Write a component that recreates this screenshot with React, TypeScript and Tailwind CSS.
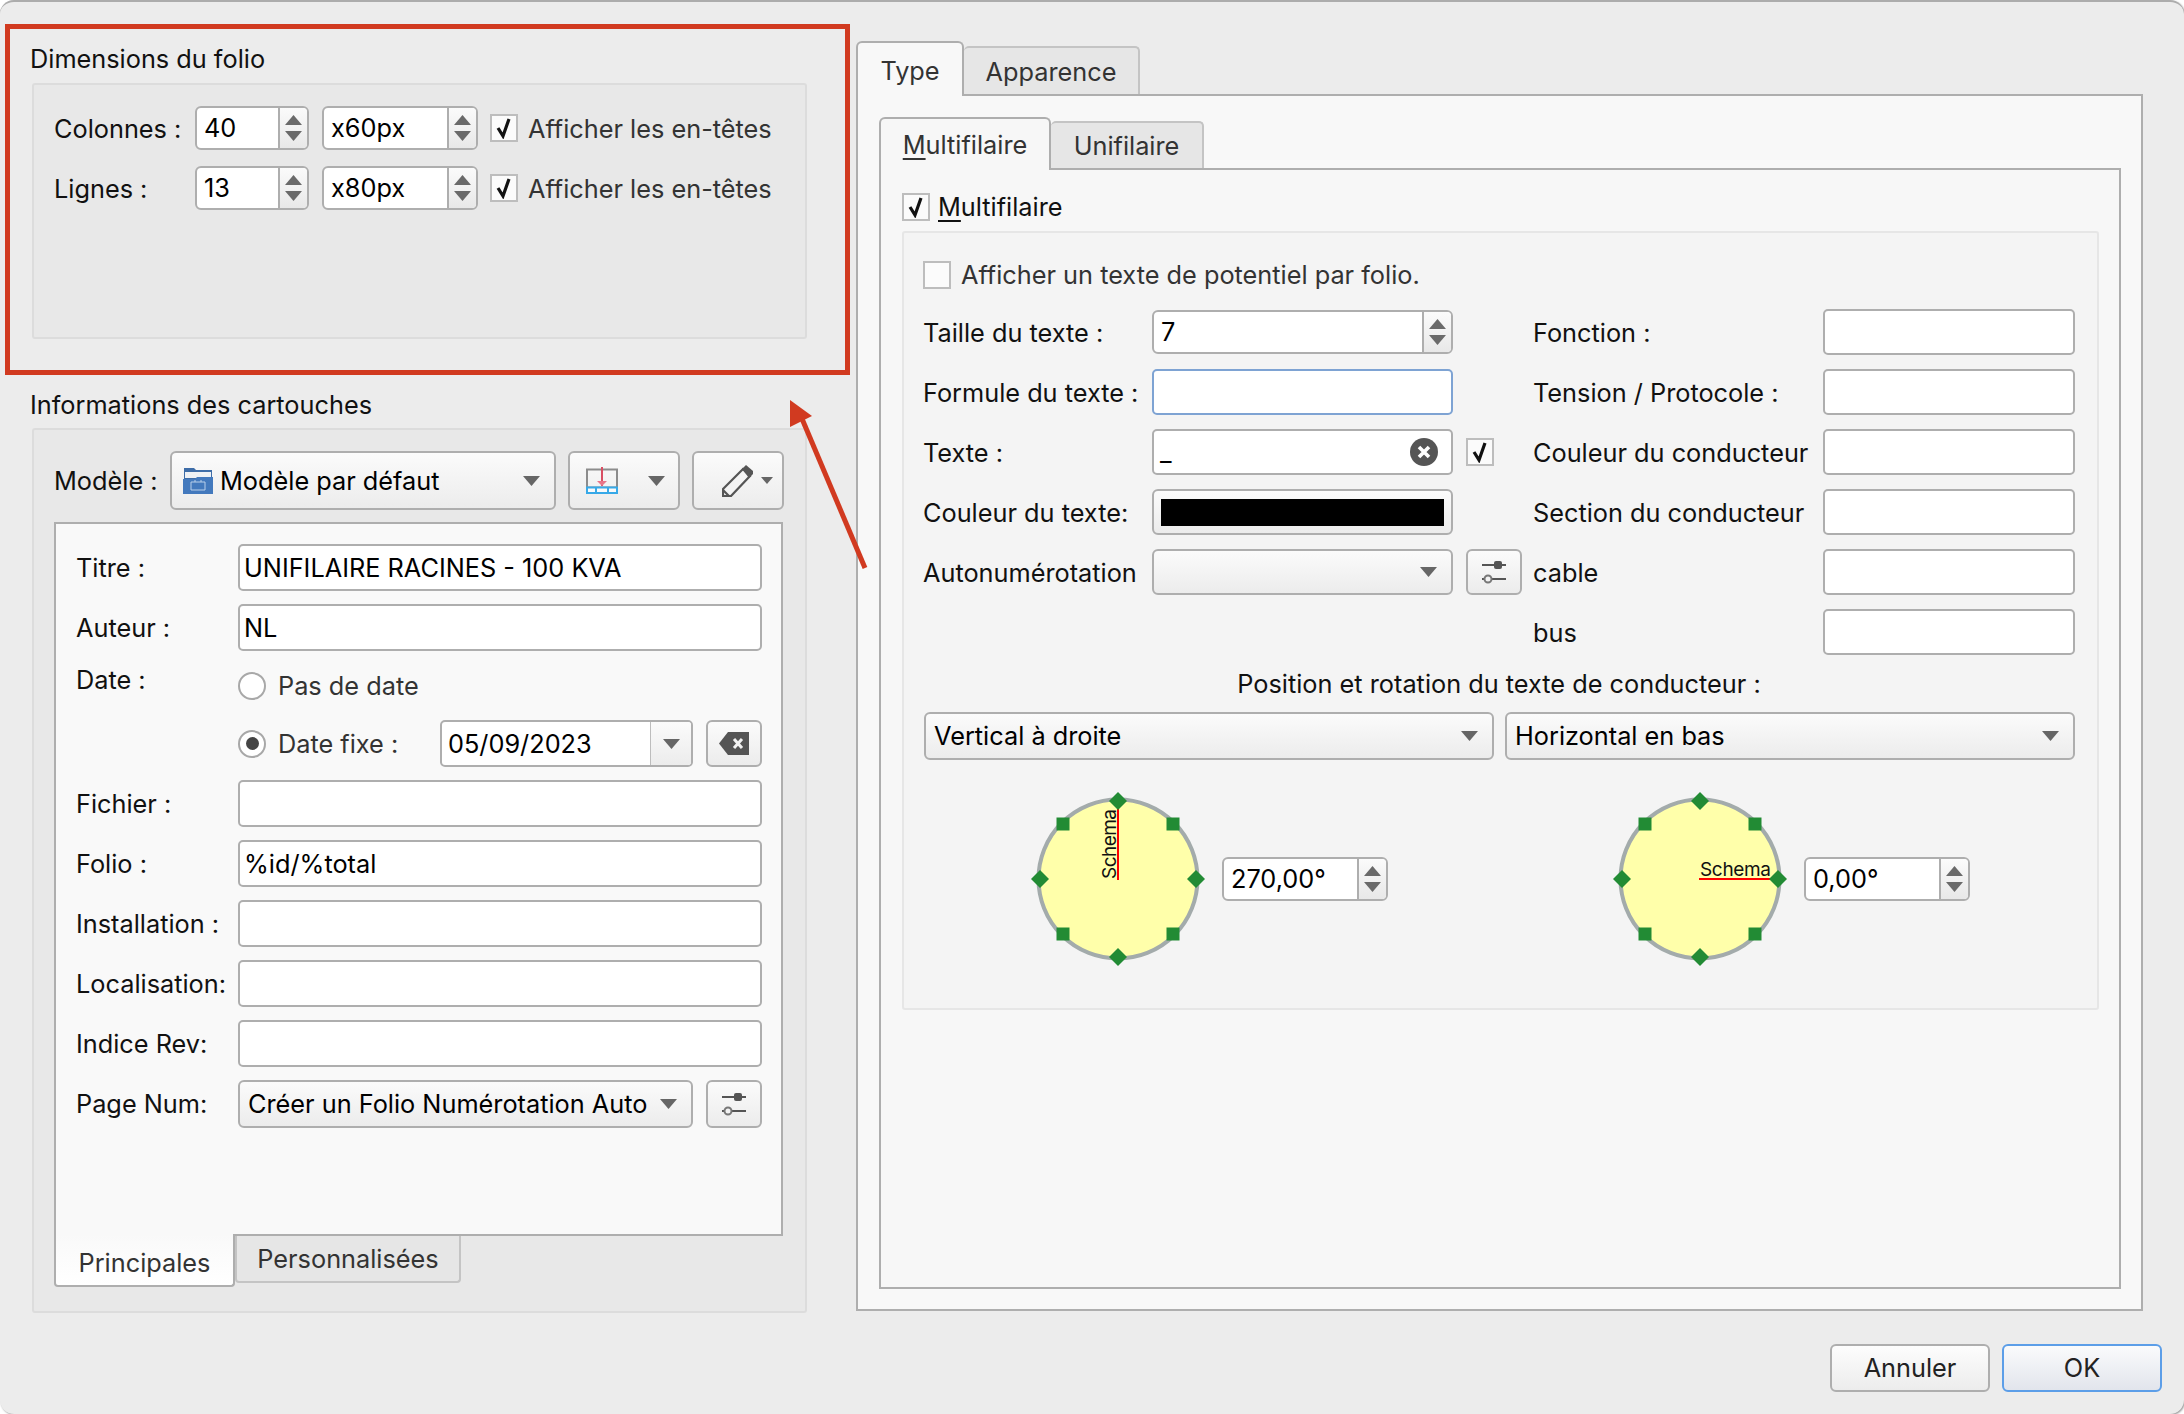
import type { ReactNode } from 'react'

const fieldBaseClass = 'flex items-center rounded-[5px] border-2 bg-white text-black'
const textFieldClass = `${fieldBaseClass} border-[#aeaeae]`
const buttonClass = 'flex items-center rounded-[6px] border-2 border-[#aeaeae] bg-gradient-to-b from-[#fbfbfb] to-[#ececec] text-black'

function Caret({ small = false }: { small?: boolean }) {
    return (
        <svg width={small ? 12 : 17} height={small ? 7 : 10} viewBox="0 0 17 10" preserveAspectRatio="none">
            <polygon points="0,0 17,0 8.5,10" fill="#666" />
        </svg>
    )
}

function SpinArrows() {
    return (
        <div className="flex flex-col items-center gap-[6px]">
            <svg width="17" height="10" viewBox="0 0 17 10">
                <polygon points="0,10 17,10 8.5,0" fill="#6a6a6a" />
            </svg>
            <svg width="17" height="10" viewBox="0 0 17 10">
                <polygon points="0,0 17,0 8.5,10" fill="#6a6a6a" />
            </svg>
        </div>
    )
}

function SpinBox({ value, width, height = 'h-[44px]' }: { value: string; width: string; height?: string }) {
    return (
        <div className={`flex overflow-hidden rounded-[6px] border-2 border-[#aeaeae] bg-white ${width} ${height}`}>
            <div className="flex flex-1 items-center pl-[7px] text-black">{value}</div>
            <div className="flex w-[29px] items-center justify-center border-l-2 border-[#aeaeae] bg-gradient-to-b from-[#fbfbfb] to-[#e8e8e8]">
                <SpinArrows />
            </div>
        </div>
    )
}

function Check({ checked = true }: { checked?: boolean }) {
    return (
        <div className="flex h-[28px] w-[28px] shrink-0 items-center justify-center border-2 border-[#bdbdbd] bg-[#fbfbfb]">
            {checked && (
                <svg width="18" height="22" viewBox="0 0 18 22">
                    <path d="M3 11 L8 19 L14 2" fill="none" stroke="#111" strokeWidth="3.2" />
                </svg>
            )}
        </div>
    )
}

function Radio({ checked = false }: { checked?: boolean }) {
    return (
        <div className="flex h-[28px] w-[28px] shrink-0 items-center justify-center rounded-full border-2 border-[#a8a8a8] bg-white">
            {checked && <div className="h-[13px] w-[13px] rounded-full bg-[#444]" />}
        </div>
    )
}

function SlidersIcon() {
    return (
        <svg width="26" height="26" viewBox="0 0 26 26">
            <path d="M1 6 H25 M1 20 H25" stroke="#555" strokeWidth="2" />
            <rect x="13" y="2" width="8" height="8" rx="2" fill="#555" />
            <circle cx="7" cy="20" r="3.5" fill="#f2f2f2" stroke="#777" strokeWidth="2" />
        </svg>
    )
}

function FolderIcon() {
    return (
        <svg width="30" height="26" viewBox="0 0 30 26" className="ml-[3px] mr-[1px]">
            <path d="M1 0 H11 L13 2 H29 V12 H1 Z" fill="#3e6da8" />
            <rect x="2" y="4" width="26" height="6" fill="#eef1f5" />
            <path d="M0 11 H12 L14 9 H30 V26 H0 Z" fill="#4379bd" />
            <path d="M8 14 H22 V22 H8 Z M12 14 V12 M18 14 V12" fill="none" stroke="#b9d0ea" strokeWidth="1" />
        </svg>
    )
}

function TemplateIcon() {
    return (
        <svg width="32" height="27" viewBox="0 0 32 27">
            <rect x="1" y="2.5" width="30" height="18" fill="none" stroke="#8c8c8c" strokeWidth="2" />
            <path d="M16 0 V19" stroke="#d94f63" strokeWidth="2" />
            <polygon points="11,14 21,14 16,19" fill="#e8768a" />
            <rect x="1" y="20.5" width="30" height="5.5" fill="#fafafa" stroke="#37a9e8" strokeWidth="2" />
            <path d="M10 20 V27 M22 20 V27" stroke="#37a9e8" strokeWidth="2" />
        </svg>
    )
}

function PencilIcon() {
    return (
        <svg width="31" height="32" viewBox="0 0 31 32" className="shrink-0">
            <path d="M1 24 L21 4 L28 11 L9 31 L1 31 Z" fill="#f4f4f4" stroke="#555" strokeWidth="2.2" />
            <path d="M20 4 L24 0 L31 6 V9 L27 13 Z" fill="#555" />
            <path d="M1 25 L7 31" stroke="#555" strokeWidth="2.2" />
        </svg>
    )
}

function EraseIcon() {
    return (
        <svg width="32" height="25" viewBox="0 0 32 25">
            <path d="M10 1 H31 V24 H10 L1 12.5 Z" fill="#555" />
            <path d="M16 8 L24 17 M24 8 L16 17" stroke="#f2f2f2" strokeWidth="3" />
        </svg>
    )
}

function ClearIcon() {
    return (
        <svg width="28" height="28" viewBox="0 0 28 28">
            <circle cx="14" cy="14" r="14" fill="#555" />
            <path d="M9 9 L19 19 M19 9 L9 19" stroke="#fff" strokeWidth="3.6" />
        </svg>
    )
}

function Combo({ children, width, height = 'h-[48px]' }: { children?: ReactNode; width: string; height?: string }) {
    return (
        <div className={`${buttonClass} justify-between pl-[8px] pr-[14px] ${width} ${height}`}>
            <div className="flex items-center gap-[6px] whitespace-nowrap">{children}</div>
            <Caret />
        </div>
    )
}

function CardRow({ label, value }: { label: string; value?: string }) {
    return (
        <div className="flex h-[47px] items-center">
            <div className="w-[162px] shrink-0 pt-[1px]">{label}</div>
            <div className={`${textFieldClass} h-[47px] w-[524px] pl-[4px]`}>{value}</div>
        </div>
    )
}

function SizeRow({ label, value, unit }: { label: string; value: string; unit: string }) {
    return (
        <div className="flex items-center">
            <div className="w-[141px] shrink-0 whitespace-nowrap pt-[1px]">{label}</div>
            <SpinBox value={value} width="w-[114px]" />
            <div className="ml-[13px]">
                <SpinBox value={unit} width="w-[156px]" />
            </div>
            <div className="ml-[12px]">
                <Check />
            </div>
            <div className="ml-[10px] whitespace-nowrap pt-[1px] text-[#333]">Afficher les en-têtes</div>
        </div>
    )
}

function ConductorRow({ label, children }: { label: string; children: ReactNode }) {
    return (
        <div className="flex h-[46px] items-center">
            <div className="w-[229px] shrink-0 whitespace-nowrap pt-[2px]">{label}</div>
            {children}
        </div>
    )
}

function SideField({ label }: { label: string }) {
    return (
        <div className="flex h-[46px] items-center">
            <div className="w-[290px] shrink-0 whitespace-nowrap pt-[2px]">{label}</div>
            <div className={`${textFieldClass} h-[46px] w-[252px]`} />
        </div>
    )
}

const squares = [
    [35, 35],
    [145, 35],
    [35, 145],
    [145, 145],
]
const diamonds = [
    [90, 12],
    [12, 90],
    [168, 90],
    [90, 168],
]

function Dial({ vertical }: { vertical: boolean }) {
    return (
        <svg width="180" height="180" viewBox="0 0 180 180" className="shrink-0">
            <circle cx="90" cy="90" r="79.5" fill="#ffffaa" stroke="#a3abab" strokeWidth="4" />
            {vertical ? (
                <>
                    <text transform="translate(88 90) rotate(-90)" fontSize="19" fill="#111" textLength="70">Schema</text>
                    <path d="M90 20 V91" stroke="#f00" strokeWidth="2" />
                </>
            ) : (
                <>
                    <text x="90" y="87" fontSize="19" fill="#111" textLength="71">Schema</text>
                    <path d="M89 90 H160" stroke="#f00" strokeWidth="2" />
                </>
            )}
            {squares.map(([x, y]) => (
                <rect key={`${x}-${y}`} x={x - 6.5} y={y - 6.5} width="13" height="13" fill="#228b34" />
            ))}
            {diamonds.map(([x, y]) => (
                <polygon key={`${x}-${y}`} points={`${x},${y - 9} ${x + 9},${y} ${x},${y + 9} ${x - 9},${y}`} fill="#228b34" />
            ))}
        </svg>
    )
}

function CardPanel() {
    return (
        <div className="mt-[12px] flex h-[714px] w-[729px] flex-col gap-[13px] border-2 border-[#aeaeae] bg-[#f9f9f9] pl-[20px] pt-[20px]">
            <CardRow label="Titre :" value="UNIFILAIRE RACINES - 100 KVA" />
            <CardRow label="Auteur :" value="NL" />
            <div className="flex h-[43px] items-start">
                <div className="w-[162px] shrink-0 leading-[32px]">Date :</div>
                <div className="mt-[3px] flex items-center gap-[12px] text-[#333]">
                    <Radio />
                    Pas de date
                </div>
            </div>
            <div className="flex h-[47px] items-center pl-[162px]">
                <Radio checked />
                <div className="ml-[12px] w-[162px] text-[#333]">Date fixe :</div>
                <div className="flex h-[47px] w-[253px] overflow-hidden rounded-[5px] border-2 border-[#aeaeae] bg-white">
                    <div className="flex flex-1 items-center pl-[6px] text-black">05/09/2023</div>
                    <div className="flex w-[41px] items-center justify-center border-l border-[#bdbdbd] bg-gradient-to-b from-[#fbfbfb] to-[#ececec]">
                        <Caret />
                    </div>
                </div>
                <div className={`${buttonClass} ml-[13px] h-[47px] w-[56px] justify-center`}>
                    <EraseIcon />
                </div>
            </div>
            <CardRow label="Fichier :" />
            <CardRow label="Folio :" value="%id/%total" />
            <CardRow label="Installation :" />
            <CardRow label="Localisation:" />
            <CardRow label="Indice Rev:" />
            <div className="flex h-[47px] items-center">
                <div className="w-[162px] shrink-0 pt-[1px]">Page Num:</div>
                <Combo width="w-[455px]">Créer un Folio Numérotation Auto</Combo>
                <div className={`${buttonClass} ml-[13px] h-[48px] w-[56px] justify-center`}>
                    <SlidersIcon />
                </div>
            </div>
        </div>
    )
}

function LeftColumn() {
    return (
        <div className="flex w-[856px] shrink-0 flex-col pl-[32px]">
            <div className="-ml-[2px] flex h-[81px] items-end pb-[6px] leading-[36px]">Dimensions du folio</div>
            <div className="flex h-[256px] w-[775px] flex-col gap-[16px] rounded-[3px] border-2 border-[#dcdcdc] bg-[#e8e8e8] pl-[20px] pt-[21px]">
                <SizeRow label="Colonnes :" value="40" unit="x60px" />
                <SizeRow label="Lignes :" value="13" unit="x80px" />
            </div>
            <div className="-ml-[2px] flex h-[89px] items-end pb-[5px] leading-[36px]">Informations des cartouches</div>
            <div className="h-[885px] w-[775px] rounded-[3px] border-2 border-[#dcdcdc] bg-[#e8e8e8] pl-[20px] pt-[21px]">
                <div className="flex items-center">
                    <div className="w-[116px] shrink-0">Modèle :</div>
                    <Combo width="w-[386px]" height="h-[59px]">
                        <FolderIcon />
                        Modèle par défaut
                    </Combo>
                    <div className={`${buttonClass} ml-[12px] h-[59px] w-[112px] justify-between pl-[16px] pr-[13px]`}>
                        <TemplateIcon />
                        <Caret />
                    </div>
                    <div className={`${buttonClass} ml-[12px] h-[59px] w-[92px] gap-[8px] pl-[28px]`}>
                        <PencilIcon />
                        <Caret small />
                    </div>
                </div>
                <CardPanel />
                <div className="-mt-[2px] flex items-start text-[#333]">
                    <div className="flex h-[53px] w-[181px] items-center justify-center rounded-b-[4px] border-x-2 border-b-2 border-[#aeaeae] bg-gradient-to-b from-[#f9f9f9] to-white pt-[7px]">
                        Principales
                    </div>
                    <div className="mt-[2px] flex h-[47px] w-[226px] items-center justify-center rounded-b-[4px] border-x-2 border-b-2 border-[#c4c4c4] bg-[#e6e6e6] pt-[1px]">
                        Personnalisées
                    </div>
                </div>
            </div>
        </div>
    )
}

function ConductorGroup() {
    return (
        <div className="mt-[8px] h-[779px] w-[1197px] rounded-[3px] border-2 border-[#e6e6e6] bg-[#f4f4f4] pl-[19px] pt-[26px]">
            <div className="flex h-[32px] items-center gap-[10px] text-[#333]">
                <Check checked={false} />
                Afficher un texte de potentiel par folio.
            </div>
            <div className="mt-[18px] flex">
                <div className="flex w-[610px] shrink-0 flex-col gap-[14px]">
                    <ConductorRow label="Taille du texte :">
                        <SpinBox value="7" width="w-[301px]" />
                    </ConductorRow>
                    <ConductorRow label="Formule du texte :">
                        <div className={`${fieldBaseClass} h-[46px] w-[301px] border-[#7ea3d3]`} />
                    </ConductorRow>
                    <ConductorRow label="Texte :">
                        <div className={`${textFieldClass} h-[46px] w-[301px] justify-between pl-[6px] pr-[13px]`}>
                            _
                            <ClearIcon />
                        </div>
                        <div className="ml-[13px]">
                            <Check />
                        </div>
                    </ConductorRow>
                    <ConductorRow label="Couleur du texte:">
                        <div className={`${buttonClass} h-[46px] w-[301px] justify-center`}>
                            <div className="h-[27px] w-[283px] bg-black" />
                        </div>
                    </ConductorRow>
                    <ConductorRow label="Autonumérotation">
                        <Combo width="w-[301px]" height="h-[46px]" />
                        <div className={`${buttonClass} ml-[13px] h-[46px] w-[56px] justify-center`}>
                            <SlidersIcon />
                        </div>
                    </ConductorRow>
                </div>
                <div className="flex flex-col gap-[14px]">
                    <SideField label="Fonction :" />
                    <SideField label="Tension / Protocole :" />
                    <SideField label="Couleur du conducteur" />
                    <SideField label="Section du conducteur" />
                    <SideField label="cable" />
                    <SideField label="bus" />
                </div>
            </div>
            <div className="mt-[11px] w-[1152px] text-center leading-[36px]">Position et rotation du texte de conducteur :</div>
            <div className="mt-[10px] flex gap-[11px] pl-[1px]">
                <Combo width="w-[570px]">Vertical à droite</Combo>
                <Combo width="w-[570px]">Horizontal en bas</Combo>
            </div>
            <div className="mt-[29px] flex items-center pl-[105px]">
                <Dial vertical />
                <div className="ml-[14px]">
                    <SpinBox value="270,00°" width="w-[166px]" />
                </div>
                <div className="ml-[222px]">
                    <Dial vertical={false} />
                </div>
                <div className="ml-[14px]">
                    <SpinBox value="0,00°" width="w-[166px]" />
                </div>
            </div>
        </div>
    )
}

function RightColumn() {
    return (
        <div className="flex w-[1306px] flex-col">
            <div className="mt-[39px] flex h-[53px] items-end text-[#333]">
                <div className="relative z-10 -mb-[2px] flex h-[55px] w-[108px] items-center justify-center rounded-t-[6px] border-x-2 border-t-2 border-[#aeaeae] bg-[#f8f8f8] pt-[2px]">
                    Type
                </div>
                <div className="flex h-[48px] w-[176px] items-center justify-center rounded-t-[5px] border-r-2 border-t-2 border-[#c4c4c4] bg-[#e6e6e6] pt-[2px]">
                    Apparence
                </div>
            </div>
            <div className="h-[1217px] w-[1287px] border-2 border-[#aeaeae] bg-[#f8f8f8] pl-[21px] pt-[21px]">
                <div className="flex h-[51px] items-end text-[#333]">
                    <div className="relative z-10 -mb-[2px] flex h-[53px] w-[172px] items-center justify-center rounded-t-[6px] border-x-2 border-t-2 border-[#aeaeae] bg-[#f7f7f7]">
                        <span>
                            <span className="underline underline-offset-[4px]">M</span>ultifilaire
                        </span>
                    </div>
                    <div className="flex h-[47px] w-[153px] items-center justify-center rounded-t-[5px] border-r-2 border-t-2 border-[#c4c4c4] bg-[#e6e6e6] pt-[1px]">
                        Unifilaire
                    </div>
                </div>
                <div className="h-[1121px] w-[1242px] border-2 border-[#aeaeae] bg-[#f7f7f7] pl-[21px] pt-[21px]">
                    <div className="flex h-[32px] items-center gap-[8px]">
                        <Check />
                        <span>
                            <span className="underline underline-offset-[4px]">M</span>ultifilaire
                        </span>
                    </div>
                    <ConductorGroup />
                </div>
            </div>
            <div className="mt-[33px] flex justify-end gap-[12px] text-[#222]">
                <div className="flex h-[48px] w-[160px] items-center justify-center rounded-[6px] border-2 border-[#aeaeae] bg-gradient-to-b from-[#fdfdfd] to-[#ececec]">
                    Annuler
                </div>
                <div className="flex h-[48px] w-[160px] items-center justify-center rounded-[6px] border-2 border-[#5c9ee8] bg-gradient-to-b from-[#fafbfc] to-[#e2e5ec]">
                    OK
                </div>
            </div>
        </div>
    )
}

export default function App() {
    return (
        <div className="relative h-[1414px] w-[2184px] overflow-hidden bg-white text-[25.3px] text-[#111] [font-family:Inter,sans-serif]">
            <div className="flex h-full rounded-[14px] border-t-2 border-[#acacac] bg-[#ececec] shadow-[1px_1px_2px_#999]">
                <LeftColumn />
                <RightColumn />
            </div>
            {/* annotation drawn over the screenshot */}
            <div className="absolute left-[5px] top-[24px] h-[351px] w-[845px] border-[5px] border-[#d13a20]" />
            <svg width="100" height="190" viewBox="0 0 100 190" className="absolute left-[780px] top-[390px]">
                <path d="M85 178 L20 24" stroke="#d13a20" strokeWidth="5" fill="none" />
                <polygon points="10,10 10,37 32,26" fill="#d13a20" />
            </svg>
        </div>
    )
}
